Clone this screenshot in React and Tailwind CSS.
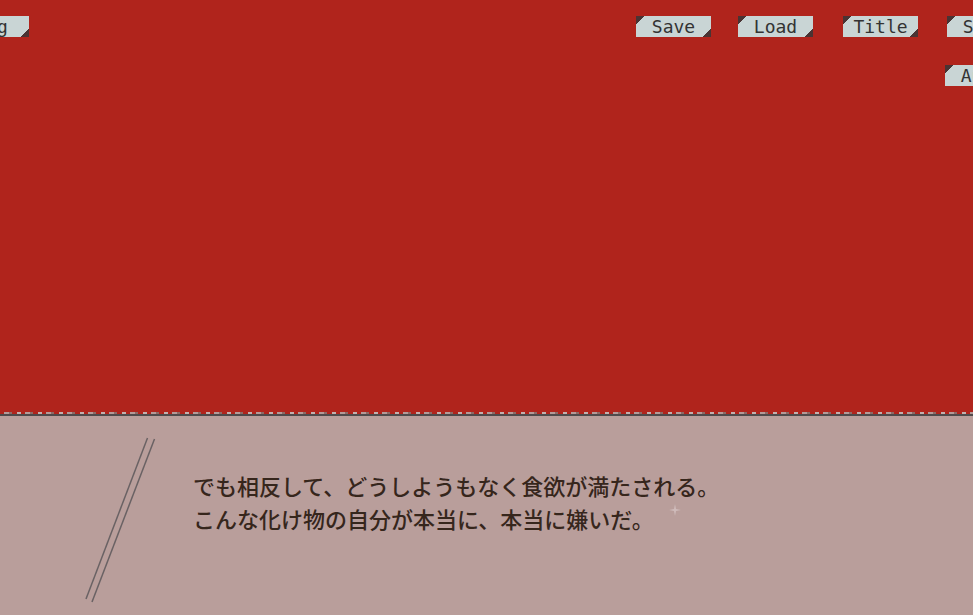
const MenuButton = ({ label, className = '' }) => (
  <button
    className={`shrink-0 w-[75px] h-[21px] flex items-center justify-center bg-[#c9d5d5] bg-[linear-gradient(135deg,#4a3333_6px,transparent_6px),linear-gradient(-45deg,#4a3333_6px,transparent_6px)] text-[#333333] text-[18px] leading-none font-['DejaVu_Sans_Mono',monospace] ${className}`}
  >
    {label}
  </button>
);

export default function App() {
  return (
    <div className="w-[973px] h-[615px] overflow-hidden flex flex-col bg-[#b0241c]">
      {/* Top stage */}
      <div className="h-[412px] shrink-0 bg-[#b0241c] pt-4">
        <div className="flex">
          <MenuButton label="Log" className="ml-[-46px]" />
          <MenuButton label="Save" className="ml-[607px]" />
          <MenuButton label="Load" className="ml-[27px] w-[74px]" />
          <MenuButton label="Title" className="ml-[30px] w-[74px]" />
          <MenuButton label="Skip" className="ml-[29px]" />
        </div>
        <div className="flex mt-[28px]">
          <MenuButton label="Auto" className="ml-[945px]" />
        </div>
      </div>

      {/* Torn edge */}
      <div className="h-[2px] shrink-0 bg-[repeating-linear-gradient(90deg,#b0241c_0px,#b0241c_4px,#b49a98_4px,#b49a98_9px,#8e6a66_9px,#8e6a66_12px,#b0241c_12px,#b0241c_17px,#c3b0ae_17px,#c3b0ae_21px)]" />
      <div className="h-[2px] shrink-0 bg-[#4f4a4b]" />

      {/* Message window */}
      <div className="relative flex-1 bg-[#b99e9b] pt-[53px] pl-[193px]">
        <svg className="absolute left-0 top-0" width="200" height="200" viewBox="0 0 200 200">
          <line x1="147.5" y1="22" x2="86" y2="183" stroke="#6a6264" strokeWidth="1.5" />
          <line x1="154.5" y1="23" x2="92" y2="186" stroke="#6a6264" strokeWidth="1.5" />
        </svg>
        <svg className="absolute left-[669px] top-[88px]" width="12" height="12" viewBox="0 0 12 12">
          <path d="M6 0 L7 5 L12 6 L7 7 L6 12 L5 7 L0 6 L5 5 Z" fill="#d9c8c8" opacity="0.7" />
        </svg>
        <p className="text-[22px] leading-[33px] font-medium text-[#36261c] font-['Noto_Sans_CJK_JP',sans-serif]">
          でも相反して、どうしようもなく食欲が満たされる。
          <br />
          こんな化け物の自分が本当に、本当に嫌いだ。
        </p>
      </div>
    </div>
  );
}
